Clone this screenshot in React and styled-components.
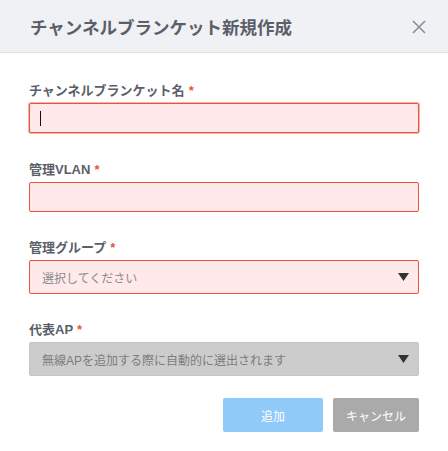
import React from "react";
import styled, { createGlobalStyle } from "styled-components";

const Global = createGlobalStyle`
  html, body { margin: 0; padding: 0; background: #fff; }
  body { font-family: "Liberation Sans", "Noto Sans CJK JP", sans-serif; }
  * { box-sizing: border-box; }
`;

const Dialog = styled.div`
  width: 448px;
  height: 451px;
  background: #fff;
  display: flex;
  flex-direction: column;
`;

const Header = styled.div`
  height: 53px;
  background: #f0f1f5;
  border-bottom: 1px solid #dfe0e5;
  display: flex;
  align-items: center;
  justify-content: space-between;
  padding: 0 20px 0 30px;
`;

const Title = styled.h1`
  margin: 0;
  font-size: 17.5px;
  font-weight: 700;
  color: #5b5f69;
`;

const Close = styled.button`
  border: none;
  background: none;
  padding: 0;
  width: 18px;
  height: 18px;
  display: flex;
  align-items: center;
  justify-content: center;
  cursor: pointer;
  margin-top: 2px;
`;

const Body = styled.div`
  padding: 29px 29px 0 29px;
  display: flex;
  flex-direction: column;
`;

const Field = styled.div`
  display: flex;
  flex-direction: column;
  margin-bottom: ${(p) => p.$gap}px;
`;

const Label = styled.label`
  font-size: 13px;
  font-weight: 700;
  line-height: 18px;
  color: #5b5f69;
  margin-bottom: 3px;
`;

const Req = styled.span`
  color: #e8553f;
  margin-left: 4px;
`;

const Input = styled.div`
  height: ${(p) => p.$h}px;
  border: 1px solid #e8553f;
  border-radius: 2px;
  background: #ffe9ea;
  display: flex;
  align-items: center;
  padding-left: 10px;
  box-shadow: ${(p) => (p.$focus ? "0 0 0 1px rgba(232,85,63,0.45)" : "none")};
`;

const Caret = styled.span`
  width: 1px;
  height: 15px;
  background: #111;
`;

const Select = styled.div`
  height: 34px;
  border: 1px solid ${(p) => (p.$disabled ? "#c4c4c4" : "#e8553f")};
  border-radius: 2px;
  background: ${(p) => (p.$disabled ? "#cccccc" : "#ffe9ea")};
  display: flex;
  align-items: center;
  justify-content: space-between;
  padding: 0 9px 0 12px;
  font-size: 12px;
  color: ${(p) => (p.$disabled ? "#7c7c7c" : "#8a8a8a")};
`;

const Buttons = styled.div`
  display: flex;
  justify-content: flex-end;
  gap: 10px;
  margin-top: 22px;
`;

const Button = styled.button`
  height: 34px;
  width: ${(p) => p.$w}px;
  border: none;
  border-radius: 2px;
  background: ${(p) => p.$bg};
  color: #fff;
  font-family: inherit;
  font-size: 12px;
  padding: 0;
`;

const Arrow = () => (
  <svg width="11" height="8" viewBox="0 0 11 8">
    <path d="M0 0 L11 0 L5.5 8 Z" fill="#333" />
  </svg>
);

export default function App() {
  return (
    <>
      <Global />
      <Dialog>
        <Header>
          <Title>チャンネルブランケット新規作成</Title>
          <Close aria-label="close">
            <svg width="14" height="14" viewBox="0 0 14 14">
              <path d="M1 1 L13 13 M13 1 L1 13" stroke="#8a8e99" strokeWidth="1.6" />
            </svg>
          </Close>
        </Header>
        <Body>
          <Field $gap={28}>
            <Label>
              チャンネルブランケット名<Req>*</Req>
            </Label>
            <Input $h={30} $focus>
              <Caret />
            </Input>
          </Field>
          <Field $gap={27}>
            <Label>
              管理VLAN<Req>*</Req>
            </Label>
            <Input $h={30} />
          </Field>
          <Field $gap={27}>
            <Label>
              管理グループ<Req>*</Req>
            </Label>
            <Select>
              <span>選択してください</span>
              <Arrow />
            </Select>
          </Field>
          <Field $gap={0}>
            <Label>
              代表AP<Req>*</Req>
            </Label>
            <Select $disabled>
              <span>無線APを追加する際に自動的に選出されます</span>
              <Arrow />
            </Select>
          </Field>
          <Buttons>
            <Button $w={100} $bg="#90caf9">追加</Button>
            <Button $w={86} $bg="#aaaaaa">キャンセル</Button>
          </Buttons>
        </Body>
      </Dialog>
    </>
  );
}
